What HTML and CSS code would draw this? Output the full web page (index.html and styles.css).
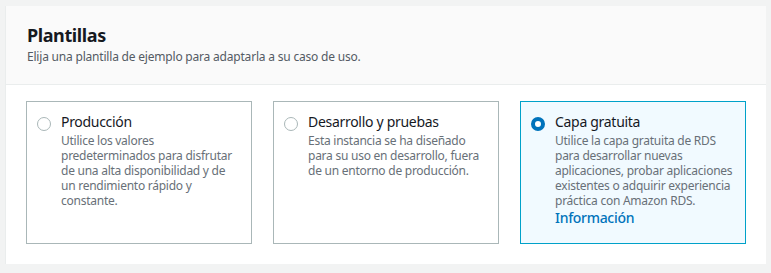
FILE: index.html
```html
<!DOCTYPE html>
<html lang="es">
<head>
  <meta charset="UTF-8" />
  <title>Plantillas</title>
  <link rel="stylesheet" href="styles.css">
</head>
<body>
  <div class="panel">
    <div class="panel-header">
      <h2>Plantillas</h2>
      <p>Elija una plantilla de ejemplo para adaptarla a su caso de uso.</p>
    </div>

    <div class="opciones">
      <label class="opcion">
        <span class="radio"></span>
        <span class="opcion-texto">
          <span class="opcion-titulo">Producción</span>
          <span class="opcion-desc">Utilice los valores predeterminados para disfrutar de una alta disponibilidad y de un rendimiento rápido y constante.</span>
        </span>
      </label>

      <label class="opcion">
        <span class="radio"></span>
        <span class="opcion-texto">
          <span class="opcion-titulo">Desarrollo y pruebas</span>
          <span class="opcion-desc">Esta instancia se ha diseñado para su uso en desarrollo, fuera de un entorno de producción.</span>
        </span>
      </label>

      <label class="opcion seleccionada">
        <span class="radio"></span>
        <span class="opcion-texto">
          <span class="opcion-titulo">Capa gratuita</span>
          <span class="opcion-desc">Utilice la capa gratuita de RDS para desarrollar nuevas aplicaciones, probar aplicaciones existentes o adquirir experiencia práctica con Amazon RDS.</span>
          <a class="info" href="#">Información</a>
        </span>
      </label>
    </div>
  </div>
</body>
</html>
```

FILE: styles.css
```css
body {
  margin: 6px 5px 0 5px;
  background-color: #f2f3f3;
  font-family: "Noto Sans", sans-serif;
  color: #16191f;
}

.panel {
  background-color: #fff;
  border-left: 1px solid #eaeded;
  box-shadow: 1px 1px 1px 0 rgba(0, 28, 36, 0.3);
  padding-bottom: 20px;
}

.panel-header {
  background-color: #fafafa;
  border-bottom: 1px solid #eaeded;
  padding: 17px 20px 19px 21px;
}

.panel-header h2 {
  margin: 0;
  font-size: 18px;
  line-height: 24px;
  font-weight: 700;
  letter-spacing: -0.4px;
}

.panel-header p {
  margin: 2px 0 0 0;
  font-size: 12px;
  line-height: 16px;
  color: #545b64;
  letter-spacing: -0.2px;
}

.opciones {
  display: grid;
  grid-template-columns: 1fr 1fr 1fr;
  gap: 21px;
  padding: 16px 20px 0 20px;
}

.opcion {
  display: flex;
  gap: 10px;
  height: 143px;
  box-sizing: border-box;
  border: 1px solid #aab7b8;
  padding: 9px 10px 10px 10px;
  cursor: pointer;
}

.opcion.seleccionada {
  border-color: #00a1c9;
  background-color: #f1faff;
}

.radio {
  flex: none;
  width: 14px;
  height: 14px;
  margin-top: 6px;
  box-sizing: border-box;
  border: 1px solid #aab7b8;
  border-radius: 50%;
  background-color: #fff;
}

.seleccionada .radio {
  border: 4px solid #0073bb;
}

.opcion-texto {
  display: flex;
  flex-direction: column;
}

.opcion-titulo {
  font-size: 14px;
  line-height: 22px;
  color: #16191f;
  letter-spacing: -0.3px;
}

.opcion-desc {
  font-size: 12px;
  line-height: 15px;
  color: #687078;
  letter-spacing: -0.25px;
}

.info {
  margin-top: 1px;
  font-size: 14px;
  line-height: 18px;
  font-weight: 500;
  color: #0073bb;
  text-decoration: none;
  letter-spacing: -0.3px;
}
```
